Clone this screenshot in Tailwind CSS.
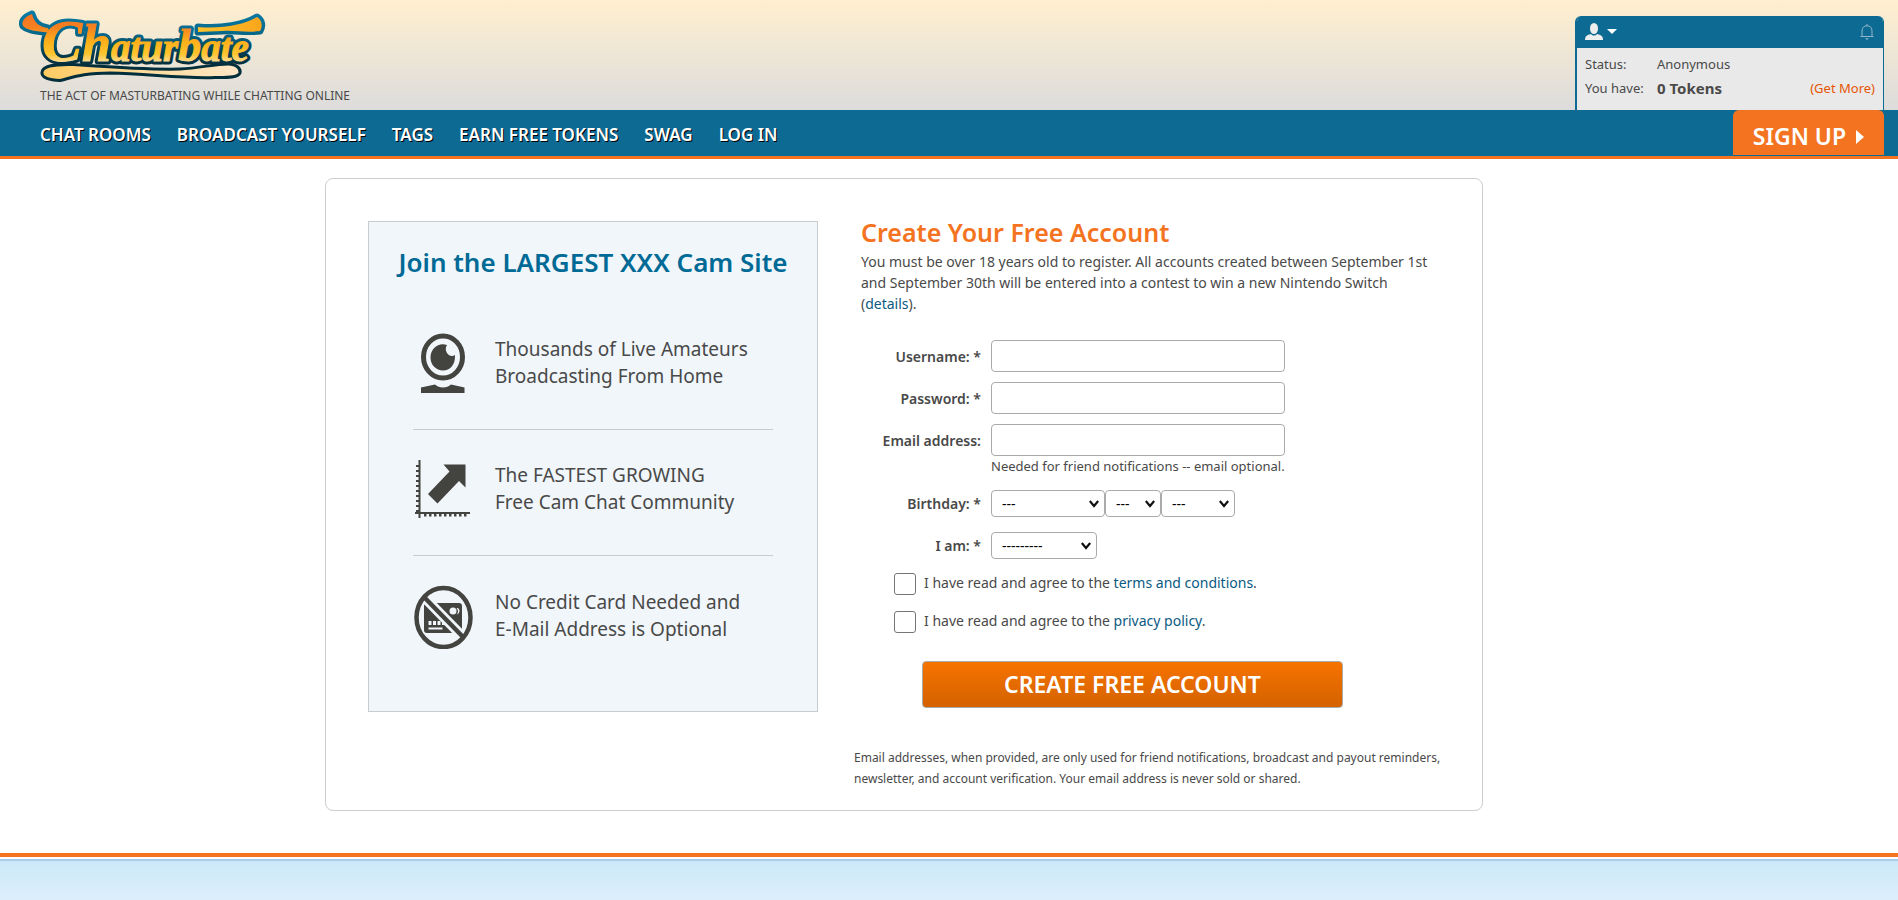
<!DOCTYPE html>
<html lang="en">
<head>
  <meta charset="UTF-8" />
  <meta name="viewport" content="width=device-width, initial-scale=1.0" />
  <title>Create Your Free Account</title>
  <script src="https://cdn.jsdelivr.net/npm/@tailwindcss/browser@4"></script>
</head>
<body class="bg-white font-['Noto_Sans',sans-serif] text-[#494949]">
  <!-- Header -->
  <header class="flex justify-between h-[110px] bg-linear-to-b from-[#ffefce] to-[#dcdcdc]">
    <div class="pl-4 pt-2">
      <a href="#" aria-label="Home" class="block">
        <svg class="block w-[252px] h-[78px]" viewBox="16 8 252 78">
          <defs>
            <linearGradient id="fill" gradientUnits="userSpaceOnUse" x1="0" y1="14" x2="0" y2="64">
              <stop offset="0" stop-color="#f47321" />
              <stop offset="0.25" stop-color="#f67f20" />
              <stop offset="0.55" stop-color="#fdb01a" />
              <stop offset="0.8" stop-color="#fec52e" />
              <stop offset="1" stop-color="#ffe2b0" />
            </linearGradient>
            <linearGradient id="tail" gradientUnits="userSpaceOnUse" x1="205" y1="0" x2="262" y2="0">
              <stop offset="0" stop-color="#fbc02a" />
              <stop offset="1" stop-color="#fba51c" />
            </linearGradient>
            <linearGradient id="edge" gradientUnits="userSpaceOnUse" x1="0" y1="12" x2="0" y2="66">
              <stop offset="0" stop-color="#0a7aa6" />
              <stop offset="0.4" stop-color="#08688a" />
              <stop offset="0.8" stop-color="#04394a" />
              <stop offset="1" stop-color="#032f3c" />
            </linearGradient>
            <linearGradient id="under" x1="0" y1="0" x2="1" y2="0">
              <stop offset="0" stop-color="#fecb62" />
              <stop offset="0.5" stop-color="#fedc9c" />
              <stop offset="1" stop-color="#ffe6c6" />
            </linearGradient>
          </defs>
          <path d="M42 72C43 65 56 64 74 64.500C110 67 150 70 180 69C200 68 215 64 228 64C237 64 241 69 240 73C238 78 226 77.500 215 77.500C185 79 150 74 110 73C85 73 74 77 60 80.500C50 80 41 78 42 72Z" fill="url(#under)" stroke="#032f3c" stroke-width="3" />
          <g stroke="url(#edge)" stroke-width="7" stroke-linejoin="round" fill="url(#edge)">
            <path d="M32 14C24 17 21 22 23 26C28 31 38 31 50 33L48 28C39 27 34 22 32 14Z" />
            <path d="M198 27C222 29 244 25 257 17C262 20 263 26 260 31C246 33 236 30 222 31L198 32Z" />
            <text x="42" y="61" font-family="Liberation Serif" font-weight="700" font-style="italic" font-size="39"><tspan font-size="60">C</tspan><tspan font-size="52">h</tspan>atur<tspan font-size="46">b</tspan>ate</text>
          </g>
          <g fill="url(#fill)">
            <path d="M32 14C24 17 21 22 23 26C28 31 38 31 50 33L48 28C39 27 34 22 32 14Z" />
            <path d="M198 27C222 29 244 25 257 17C262 20 263 26 260 31C246 33 236 30 222 31L198 32Z" fill="url(#tail)" />
            <text x="42" y="61" font-family="Liberation Serif" font-weight="700" font-style="italic" font-size="39" stroke="url(#fill)" stroke-width="1"><tspan font-size="60">C</tspan><tspan font-size="52">h</tspan>atur<tspan font-size="46">b</tspan>ate</text>
          </g>
        </svg>
      </a>
      <p class="pl-6 text-[12px] leading-[20px] whitespace-nowrap">THE ACT OF MASTURBATING WHILE CHATTING ONLINE</p>
    </div>

    <!-- User panel -->
    <div class="mt-4 mr-[14px] w-[309px] rounded-t-md overflow-hidden border-l-2 border-r border-[#0d6a93] bg-[#e9e9e9]">
      <div class="flex items-center justify-between h-8 px-2 bg-[#0d6a93]">
        <button type="button" aria-label="Account menu" class="flex items-center gap-1">
          <svg class="w-[18px] h-[18px]" viewBox="0 0 18 18" fill="#eeeeee">
            <ellipse cx="9" cy="5.500" rx="4" ry="5.500" />
            <path d="M0 17C0 13 2 12 6 11C7.500 13 10.500 13 12 11C16 12 18 13 18 17Z" />
          </svg>
          <svg class="w-[10px] h-[6px]" viewBox="0 0 10 6" fill="#ffffff"><path d="M0 0H10L5 5Z" /></svg>
        </button>
        <button type="button" aria-label="Notifications">
          <svg class="w-4 h-4" viewBox="0 0 16 16" fill="none" stroke="#8fb6ca" stroke-width="1">
            <path d="M1.500 12.500H14.500M3 12.500V7C3 3.500 5 1.800 8 1.800S13 3.500 13 7V12.500M8 0V1.800" />
            <path d="M6 14.200H10L8 16Z" fill="#8fb6ca" stroke="none" />
          </svg>
        </button>
      </div>
      <div class="grid grid-cols-[72px_1fr_auto] items-center px-2 pt-1 text-[13px] leading-6">
        <span>Status:</span><span class="col-span-2">Anonymous</span>
        <span>You have:</span><span class="text-[15px] font-bold">0 Tokens</span>
        <a href="#" class="text-[#e65504]">(Get More)</a>
      </div>
    </div>
  </header>

  <!-- Navigation -->
  <nav class="flex justify-between h-[49px] pl-10 pr-[14px] bg-[#0d6a93] border-b-3 border-[#f47321] text-white">
    <div class="flex items-center gap-[26px] pt-1 text-[17px] font-semibold whitespace-nowrap text-shadow-[1px_1px_0_#000]">
      <a href="#">CHAT ROOMS</a>
      <a href="#">BROADCAST YOURSELF</a>
      <a href="#">TAGS</a>
      <a href="#">EARN FREE TOKENS</a>
      <a href="#">SWAG</a>
      <a href="#">LOG IN</a>
    </div>
    <a href="#" class="flex items-center justify-center gap-[10px] w-[151px] h-[45px] pt-2 rounded-t-md bg-[#f47321] text-[23px] font-semibold whitespace-nowrap">
      SIGN UP
      <svg class="w-2 h-[14px]" viewBox="0 0 8 14" fill="#ffffff"><path d="M0 0L8 7L0 14Z" /></svg>
    </a>
  </nav>

  <!-- Registration -->
  <main class="flex justify-center pt-[19px] pr-[90px] pb-[42px]">
    <div class="flex items-start w-full max-w-[1158px] min-h-[633px] pt-[42px] pl-[42px] border border-[#cccccc] rounded-lg">
      <section class="w-[450px] shrink-0 px-11 pb-7 border border-[#c8ccce] bg-[#f0f6fa]">
        <h2 class="pt-[22px] pb-6 -mx-11 text-center text-[26px] leading-9 font-semibold text-[#006a96]">Join the LARGEST XXX Cam Site</h2>
        <ul class="text-[19px] leading-[27px]">
          <li class="flex items-center h-[126px] gap-5 pb-2 border-b border-[#c8cccf]">
            <svg class="w-[62px] h-[66px] shrink-0" viewBox="0 0 62 66">
              <g fill="#434340">
                <ellipse cx="30" cy="27" rx="19.500" ry="21" fill="none" stroke="#434340" stroke-width="5" />
                <path d="M34 15C26 12 17.500 18 17.500 27.500C17.500 35 23 40.500 30 40.500C37 40.500 42.500 35 42 25C36.500 28.500 30 21 34 15Z" />
                <path d="M8 63V57.500L22 54.500C26 58.500 34 58.500 38 54.500L51.500 57.500V63Z" />
              </g>
            </svg>
            <span>Thousands of Live Amateurs<br />Broadcasting From Home</span>
          </li>
          <li class="flex items-center h-[126px] gap-5 pb-2 border-b border-[#c8cccf]">
            <svg class="w-[62px] h-[66px] shrink-0" viewBox="0 0 62 66">
              <g fill="none" stroke="#434340">
                <path d="M6.500 4V62M2 57H57" stroke-width="2" />
                <path d="M4.500 9V56" stroke-width="3" stroke-dasharray="2 3" />
                <path d="M11 59H54" stroke-width="3" stroke-dasharray="2.500 2.500" />
              </g>
              <path d="M30.500 8.500H52.500V31.500L46 25L24.500 47.500L15 38L36.500 15.500Z" fill="#434340" />
            </svg>
            <span>The FASTEST GROWING<br />Free Cam Chat Community</span>
          </li>
          <li class="flex items-center h-[127px] gap-5 pb-2">
            <svg class="w-[62px] h-[66px] shrink-0" viewBox="0 0 62 66">
              <rect x="11" y="20" width="38" height="30" rx="3" fill="#434340" />
              <g fill="#f0f6fa">
                <circle cx="40" cy="28" r="3.500" />
                <path d="M43.500 25C47 24 48 30.500 43.500 31.500C45.500 30 45.500 27 43.500 25Z" />
                <path d="M15.500 38h3v4h-3zM20 38h3v4h-3zM24.500 38h3v4h-3zM29 38h3v4h-3zM15.500 44.500h14v2h-14z" />
              </g>
              <path d="M11 14L51 55" stroke="#f0f6fa" stroke-width="10" />
              <path d="M11 14L51 55" stroke="#434340" stroke-width="4.500" />
              <ellipse cx="30.500" cy="34.500" rx="27" ry="29.500" fill="none" stroke="#434340" stroke-width="4.500" />
            </svg>
            <span>No Credit Card Needed and<br />E-Mail Address is Optional</span>
          </li>
        </ul>
      </section>

      <section class="flex-1 pl-9 pr-7">
        <div class="pl-[7px]">
          <h1 class="text-[25px] leading-[22px] font-semibold text-[#f47321]">Create Your Free Account</h1>
          <p class="pt-2 text-[14px] leading-[21px]">You must be over 18 years old to register. All accounts created between September 1st<br />and September 30th will be entered into a contest to win a new Nintendo Switch<br />(<a href="#" class="text-[#0a5a83]">details</a>).</p>
        </div>
        <form class="pl-[7px] pt-[26px] text-[14px]">
          <div class="grid grid-cols-[120px_1fr] gap-[10px] items-center">
            <label for="username" class="text-right font-semibold">Username: *</label>
            <input id="username" type="text" class="w-[294px] h-8 px-2 border border-[#aaaaaa] rounded bg-white" />
            <label for="password" class="text-right font-semibold">Password: *</label>
            <input id="password" type="password" class="w-[294px] h-8 px-2 border border-[#aaaaaa] rounded bg-white" />
            <label for="email" class="text-right font-semibold whitespace-nowrap">Email address:</label>
            <input id="email" type="email" aria-describedby="email-hint" class="w-[294px] h-8 px-2 border border-[#aaaaaa] rounded bg-white" />
          </div>
          <p id="email-hint" class="pl-[130px] text-[13px] leading-5">Needed for friend notifications -- email optional.</p>
          <div class="grid grid-cols-[120px_1fr] gap-x-[10px] gap-y-[15px] items-center pt-[14px]">
            <label for="month" class="text-right font-semibold">Birthday: *</label>
            <div class="flex text-black">
              <div class="relative w-[114px]">
                <select id="month" class="block w-full h-[27px] pl-[10px] appearance-none border border-[#aaaaaa] rounded bg-white"><option>---</option></select>
                <svg class="absolute right-[6px] top-[10px] w-[10px] h-2 pointer-events-none" viewBox="0 0 10 8" fill="none" stroke="#101010" stroke-width="2.200"><path d="M0.800 1L5 6L9.200 1" /></svg>
              </div>
              <div class="relative w-[56px]">
                <select aria-label="Day" class="block w-full h-[27px] pl-[10px] appearance-none border border-[#aaaaaa] rounded bg-white"><option>---</option></select>
                <svg class="absolute right-[6px] top-[10px] w-[10px] h-2 pointer-events-none" viewBox="0 0 10 8" fill="none" stroke="#101010" stroke-width="2.200"><path d="M0.800 1L5 6L9.200 1" /></svg>
              </div>
              <div class="relative w-[74px]">
                <select aria-label="Year" class="block w-full h-[27px] pl-[10px] appearance-none border border-[#aaaaaa] rounded bg-white"><option>---</option></select>
                <svg class="absolute right-[6px] top-[10px] w-[10px] h-2 pointer-events-none" viewBox="0 0 10 8" fill="none" stroke="#101010" stroke-width="2.200"><path d="M0.800 1L5 6L9.200 1" /></svg>
              </div>
            </div>
            <label for="gender" class="text-right font-semibold">I am: *</label>
            <div class="relative w-[106px] text-black">
              <select id="gender" class="block w-full h-[27px] pl-[10px] appearance-none border border-[#aaaaaa] rounded bg-white"><option>---------</option></select>
              <svg class="absolute right-[6px] top-[10px] w-[10px] h-2 pointer-events-none" viewBox="0 0 10 8" fill="none" stroke="#101010" stroke-width="2.200"><path d="M0.800 1L5 6L9.200 1" /></svg>
            </div>
          </div>
          <div class="flex flex-col gap-4 pl-[33px] pt-[14px]">
            <div class="flex items-start gap-2 leading-5">
              <input id="terms" type="checkbox" class="appearance-none w-[22px] h-[22px] border border-[#767676] rounded-[3px] bg-white" />
              <label for="terms">I have read and agree to the <a href="#" class="text-[#0a5a83]">terms and conditions</a>.</label>
            </div>
            <div class="flex items-start gap-2 leading-5">
              <input id="privacy" type="checkbox" class="appearance-none w-[22px] h-[22px] border border-[#767676] rounded-[3px] bg-white" />
              <label for="privacy">I have read and agree to the <a href="#" class="text-[#0a5a83]">privacy policy</a>.</label>
            </div>
          </div>
          <button type="submit" class="block w-[421px] h-[47px] ml-[61px] mt-7 border border-[#aaaaaa] rounded bg-linear-to-b from-[#f77300] to-[#d36200] text-[23px] leading-[45px] font-semibold text-white">CREATE FREE ACCOUNT</button>
        </form>
        <p class="pt-[39px] text-[12px] leading-[21px]">Email addresses, when provided, are only used for friend notifications, broadcast and payout reminders,<br />newsletter, and account verification. Your email address is never sold or shared.</p>
      </section>
    </div>
  </main>

  <!-- Footer -->
  <footer class="border-t-4 border-[#f47321] pt-[2px]">
    <div class="h-[41px] border-t-2 border-[#a8cce9] bg-linear-to-b from-[#cce9f9] to-[#dceefb]"></div>
  </footer>
</body>
</html>
